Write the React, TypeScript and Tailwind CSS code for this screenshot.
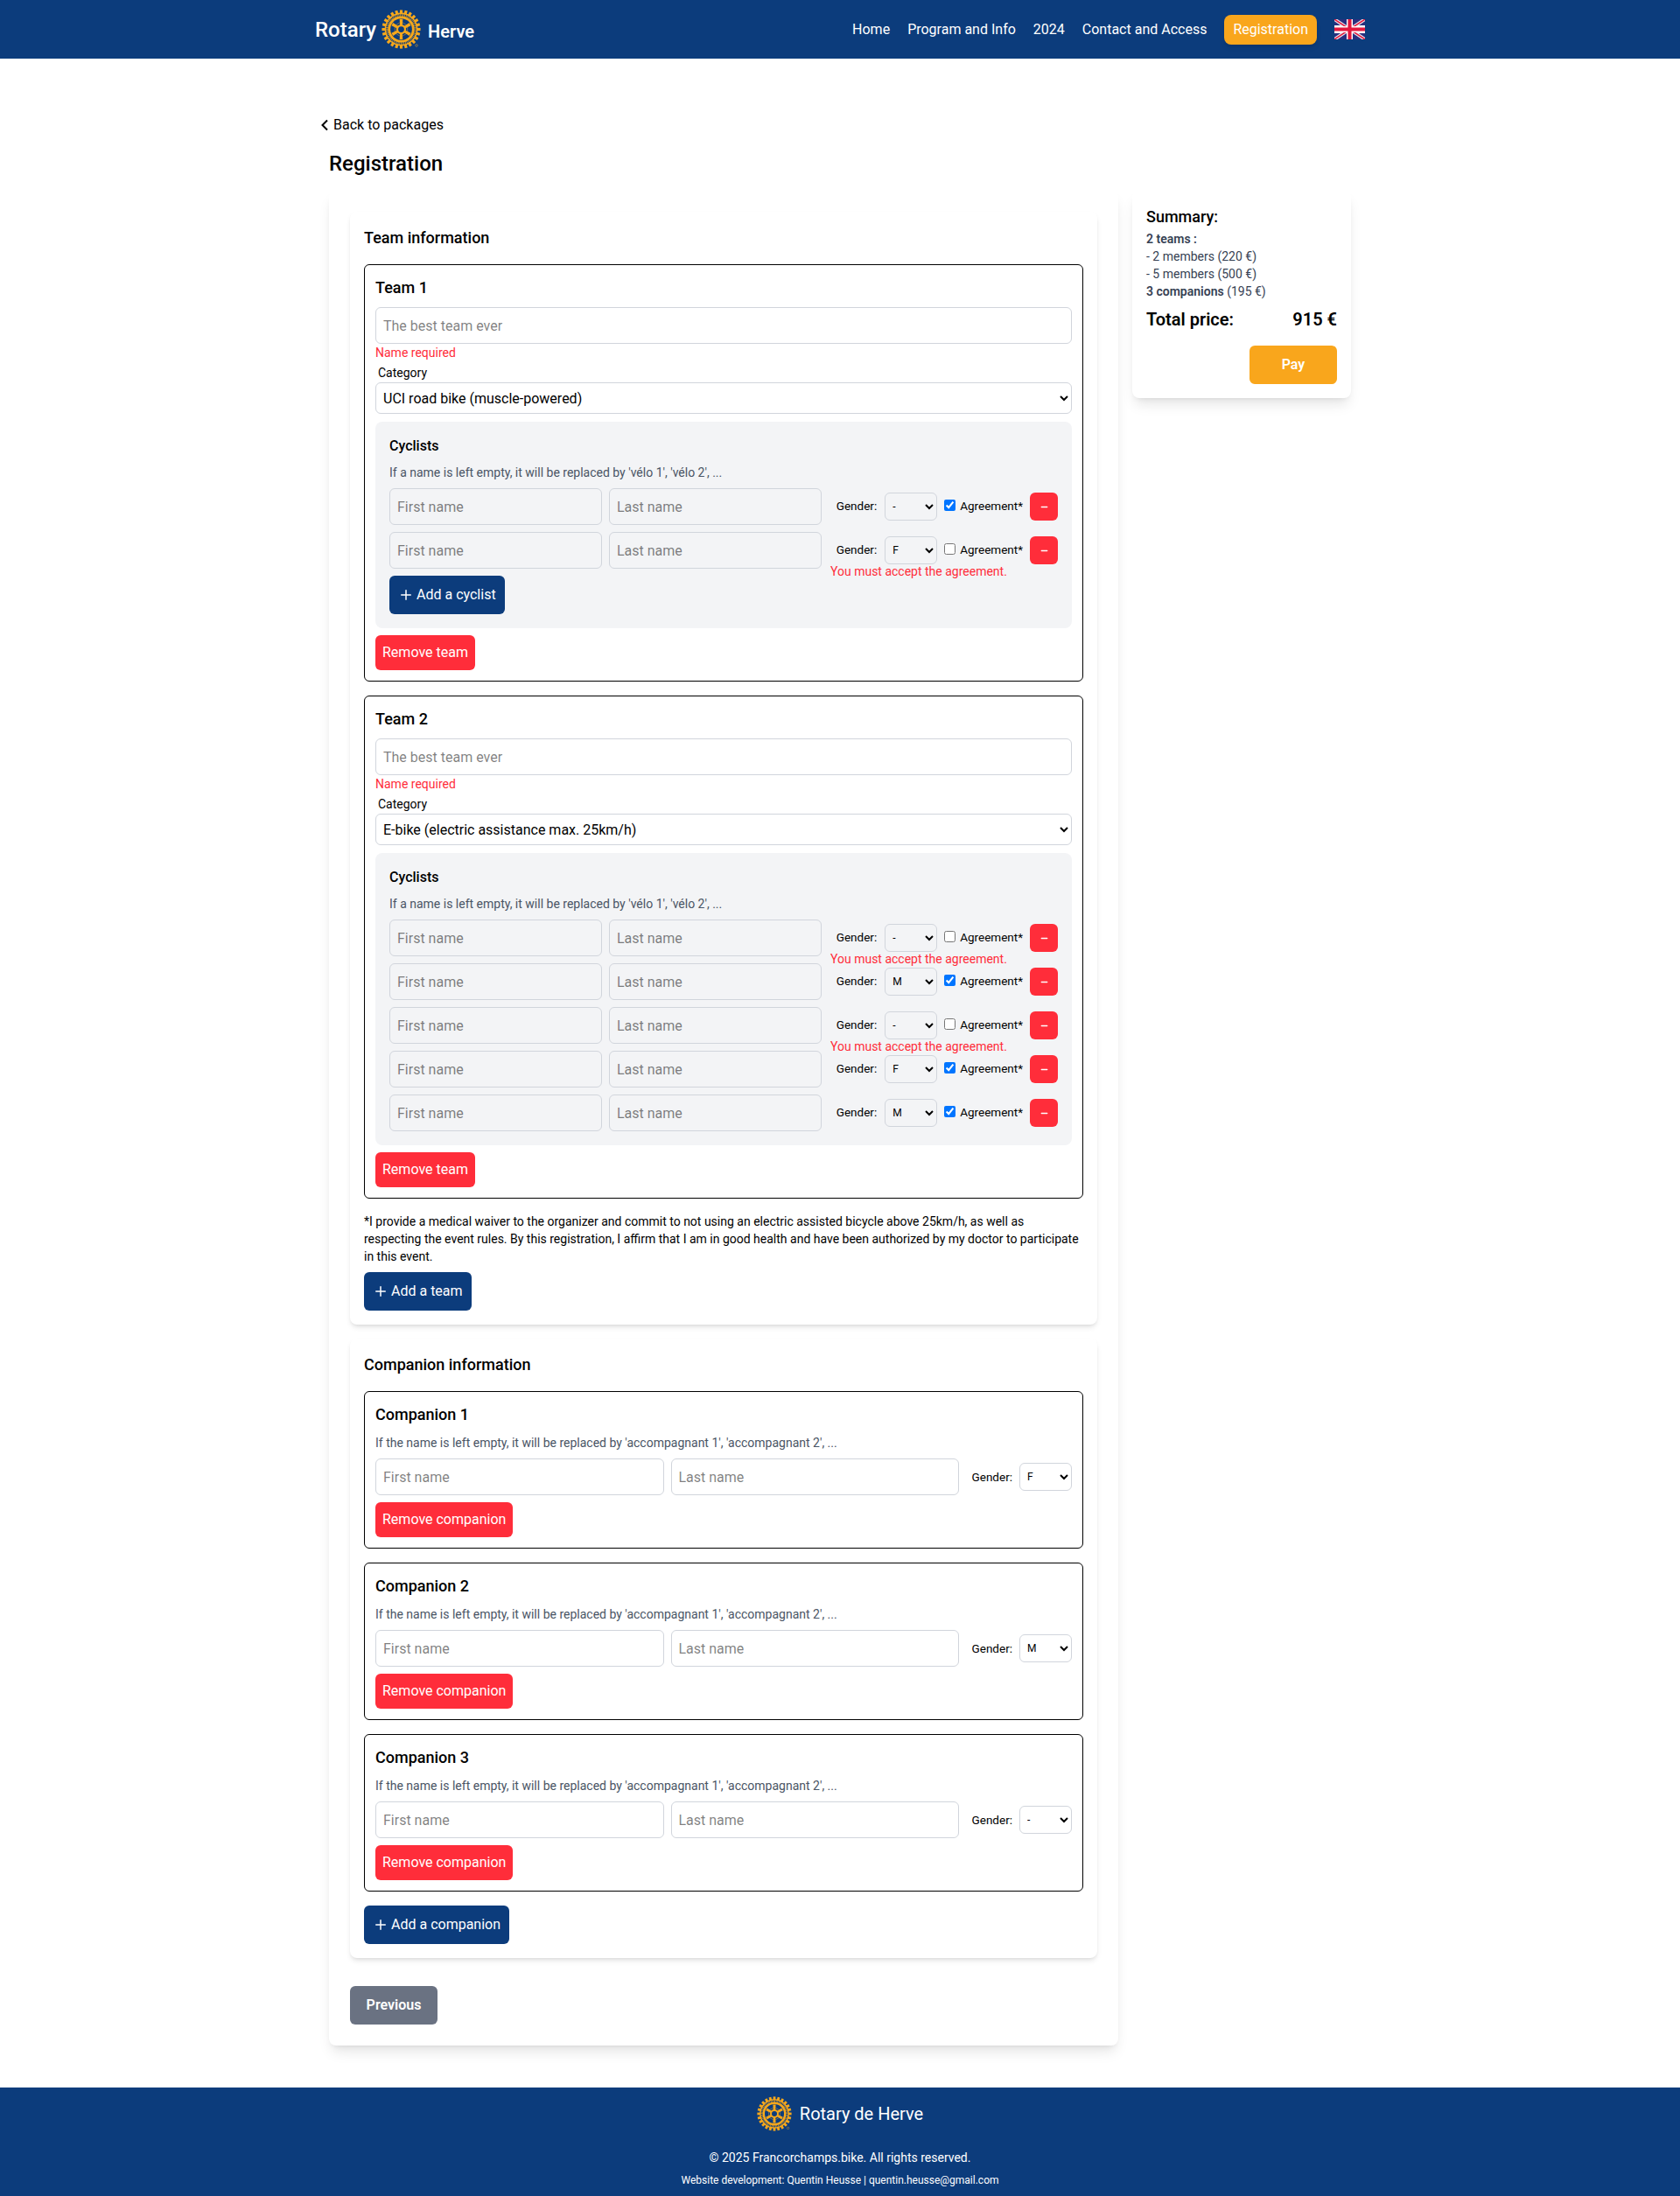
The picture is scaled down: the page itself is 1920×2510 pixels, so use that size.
import { Plus, Minus } from "lucide-react";

const NAVY = "#0c3c7c";

function Wheel({ className }: { className: string }) {
  const teeth = Array.from({ length: 24 }, (_, i) => i * 15);
  const spokes = [0, 60, 120, 180, 240, 300];
  return (
    <svg viewBox="0 0 100 100" className={className}>
      {teeth.map((a) => (
        <rect key={a} x="46.5" y="1" width="7" height="10" fill="#f7a81b" transform={`rotate(${a} 50 50)`} />
      ))}
      <circle cx="50" cy="50" r="42" fill="#f7a81b" />
      <circle cx="50" cy="50" r="36" fill="none" stroke={NAVY} strokeWidth="5" strokeDasharray="2.4 1.4" />
      <circle cx="50" cy="50" r="31" fill="#f7a81b" />
      <circle cx="50" cy="50" r="27.5" fill={NAVY} />
      {spokes.map((a) => (
        <path key={a} d="M47 40 L46 24 L54 24 L53 40 Z" fill="#f7a81b" transform={`rotate(${a} 50 50)`} />
      ))}
      <path d="M50 31 L66 40.5 L66 59.5 L50 69 L34 59.5 L34 40.5 Z" fill="none" stroke="#f7a81b" strokeWidth="2" opacity="0.55" />
      <circle cx="50" cy="50" r="12.5" fill="#f7a81b" />
      <circle cx="50" cy="50" r="7.5" fill={NAVY} />
      <circle cx="89" cy="91" r="3" fill="none" stroke="#f7a81b" strokeWidth="1" />
    </svg>
  );
}

function Flag() {
  return (
    <svg viewBox="0 0 60 40" className="h-[23px] w-[35px] shrink-0" preserveAspectRatio="none">
      <rect width="60" height="40" fill="#ffffff" />
      <path d="M0 0 L60 40 M60 0 L0 40" stroke="#e8e8ee" strokeWidth="8" />
      <path d="M0 0 L24 16 M36 24 L60 40 M60 0 L36 16 M24 24 L0 40" stroke="#e4173e" strokeWidth="2.6" />
      <path d="M6 0 L24 12 V0 Z M0 4 V12 H12 Z M54 0 L36 12 V0 Z M60 4 V12 H48 Z M6 40 L24 28 V40 Z M0 36 V28 H12 Z M54 40 L36 28 V40 Z M60 36 V28 H48 Z" fill="#2a2f7f" />
      <rect x="24" width="12" height="40" fill="#ffffff" />
      <rect y="14" width="60" height="12" fill="#ffffff" />
      <rect x="26.5" width="7" height="40" fill="#e4173e" />
      <rect y="16.5" width="60" height="7" fill="#e4173e" />
    </svg>
  );
}

const inputCls =
  "h-[42px] min-w-0 flex-1 rounded-md border border-gray-300 bg-transparent px-2 text-base text-black outline-none";

function Gender({ value }: { value: string }) {
  return (
    <select
      defaultValue={value}
      className="h-8 w-[60px] shrink-0 rounded-md border border-gray-300 bg-transparent pl-1 text-xs text-black"
    >
      <option value="-">-</option>
      <option value="M">M</option>
      <option value="F">F</option>
    </select>
  );
}

function Cyclist({ gender, agreed }: { gender: string; agreed: boolean }) {
  return (
    <div className="flex gap-2">
      <input placeholder="First name" className={inputCls} />
      <input placeholder="Last name" className={inputCls} />
      <div className="relative flex w-[262px] shrink-0 items-center justify-end gap-2 text-sm">
        <span className="mr-px text-[13.5px]">Gender:</span>
        <Gender value={gender} />
        <label className="flex items-center gap-[5px]">
          <input type="checkbox" defaultChecked={agreed} className="m-0 mb-1 size-[13px]" />
          <span className="text-[13.5px]">Agreement*</span>
        </label>
        <button className="flex size-8 shrink-0 items-center justify-center rounded-md bg-[#ff2d3a] text-white">
          <Minus size={11} strokeWidth={3} />
        </button>
        {!agreed && (
          <div className="absolute left-0.5 top-[35px] text-sm leading-5 text-[#ff2d3a]">
            You must accept the agreement.
          </div>
        )}
      </div>
    </div>
  );
}

function AddButton({ label }: { label: string }) {
  return (
    <button className="flex h-11 items-center rounded-md px-2.5 text-base text-white" style={{ background: NAVY }}>
      <Plus size={18} className="mr-[3px]" />
      {label}
    </button>
  );
}

function RedButton({ label }: { label: string }) {
  return <button className="mt-2 block h-10 rounded-md bg-[#ff2d3a] px-2 text-base text-white">{label}</button>;
}

function Team({ n, category, rows }: { n: number; category: string; rows: { g: string; a: boolean }[]; }) {
  return (
    <div className="rounded-md border border-black p-3">
      <h3 className="mb-2 text-lg font-medium leading-7">Team {n}</h3>
      <input placeholder="The best team ever" className="block h-[42px] w-full rounded-md border border-gray-300 px-2 text-base outline-none" />
      <div className="h-5 text-sm leading-5 text-[#ff2d3a]">Name required</div>
      <label className="mb-px ml-[3px] mt-[3px] block text-sm leading-5">Category</label>
      <select defaultValue={category} className="block h-9 w-full rounded-md border border-gray-300 bg-white pl-1 text-base text-black">
        <option>{category}</option>
      </select>
      <div className="mt-[9px] rounded-lg bg-gray-100 p-4">
        <h4 className="mb-2 text-base font-medium leading-6">Cyclists</h4>
        <p className="mb-2 text-sm leading-5 text-gray-600">If a name is left empty, it will be replaced by 'vélo 1', 'vélo 2', ...</p>
        <div className="flex flex-col gap-2">
          {rows.map((r, i) => (
            <Cyclist key={i} gender={r.g} agreed={r.a} />
          ))}
        </div>
        {rows.length < 5 && (
          <div className="mt-2 flex">
            <AddButton label="Add a cyclist" />
          </div>
        )}
      </div>
      <RedButton label="Remove team" />
    </div>
  );
}

function Companion({ n, gender }: { n: number; gender: string }) {
  return (
    <div className="rounded-md border border-black p-3">
      <h3 className="mb-2 text-lg font-medium leading-7">Companion {n}</h3>
      <p className="mb-2 text-sm leading-5 text-gray-600">If the name is left empty, it will be replaced by 'accompagnant 1', 'accompagnant 2', ...</p>
      <div className="flex gap-2">
        <input placeholder="First name" className={inputCls} />
        <input placeholder="Last name" className={inputCls} />
        <div className="flex w-[121px] shrink-0 items-center justify-end gap-2">
          <span className="text-[13.5px]">Gender:</span>
          <Gender value={gender} />
        </div>
      </div>
      <RedButton label="Remove companion" />
    </div>
  );
}

export default function App() {
  return (
    <div className="min-h-[2510px] bg-white font-['Roboto',sans-serif] text-black">
      <header className="h-[67px]" style={{ background: NAVY }}>
        <div className="mx-auto flex h-full w-[1200px] items-center justify-between text-white">
          <div className="flex items-center">
            <span className="text-2xl font-medium">Rotary</span>
            <Wheel className="ml-1.5 size-[45px]" />
            <span className="ml-2 mt-1 text-xl font-semibold">Herve</span>
          </div>
          <nav className="flex items-center gap-5 text-base">
            <span>Home</span>
            <span>Program and Info</span>
            <span>2024</span>
            <span>Contact and Access</span>
            <span className="flex h-[34px] items-center rounded-lg bg-[#f9a61c] px-2.5 shadow-md">Registration</span>
            <Flag />
          </nav>
        </div>
      </header>
      <main className="mx-auto w-[1168px] pt-16">
        <a className="-ml-2.5 flex items-center text-base leading-6">
          <svg viewBox="0 0 10 14" className="mr-[5px] h-3.5 w-2.5 pl-0">
            <path d="M8 1.5 L2.5 7 L8 12.5" fill="none" stroke="#000" strokeWidth="2" />
          </svg>
          Back to packages
        </a>
        <h1 className="mt-4 text-2xl font-medium leading-8">Registration</h1>
        <div className="mt-[15px] flex items-start gap-4">
          <div className="w-[902px] rounded-lg bg-white p-6 shadow-lg">
            <section className="rounded-lg bg-white p-4 shadow-md">
              <h2 className="mb-4 text-lg font-medium leading-7">Team information</h2>
              <div className="flex flex-col gap-4">
                <Team n={1} category="UCI road bike (muscle-powered)" rows={[{ g: "-", a: true }, { g: "F", a: false }]} />
                <Team
                  n={2}
                  category="E-bike (electric assistance max. 25km/h)"
                  rows={[{ g: "-", a: false }, { g: "M", a: true }, { g: "-", a: false }, { g: "F", a: true }, { g: "M", a: true }]}
                />
              </div>
              <p className="mt-4 text-sm leading-5">
                *I provide a medical waiver to the organizer and commit to not using an electric assisted bicycle above 25km/h, as well as respecting the event rules. By this registration, I affirm that I am in good health and have been authorized by my doctor to participate in this event.
              </p>
              <div className="mt-2 flex">
                <AddButton label="Add a team" />
              </div>
            </section>
            <section className="mt-4 rounded-lg bg-white p-4 shadow-md">
              <h2 className="mb-4 text-lg font-medium leading-7">Companion information</h2>
              <div className="flex flex-col gap-4">
                <Companion n={1} gender="F" />
                <Companion n={2} gender="M" />
                <Companion n={3} gender="-" />
              </div>
              <div className="mt-4 flex">
                <AddButton label="Add a companion" />
              </div>
            </section>
            <button className="mt-8 block h-11 w-[100px] rounded-md bg-gray-500 text-base font-semibold text-white">Previous</button>
          </div>
          <aside className="w-[250px] rounded-lg bg-white p-4 shadow-lg">
            <h2 className="text-lg font-medium leading-7">Summary:</h2>
            <div className="mt-px text-sm leading-5 text-gray-700">
              <div className="font-semibold">2 teams :</div>
              <div>- 2 members (220 €)</div>
              <div>- 5 members (500 €)</div>
              <div><span className="font-semibold">3 companions</span> (195 €)</div>
            </div>
            <div className="mt-2 flex justify-between text-xl font-semibold leading-7">
              <span>Total price:</span>
              <span>915 €</span>
            </div>
            <div className="mt-4 flex justify-end">
              <button className="h-11 w-[100px] rounded-md bg-[#f9a61c] text-base font-semibold text-white">Pay</button>
            </div>
          </aside>
        </div>
      </main>
      <footer className="mt-12 flex h-[124px] flex-col items-center pt-2.5 text-white" style={{ background: NAVY }}>
        <div className="flex items-center">
          <Wheel className="size-10" />
          <span className="ml-[9px] text-xl">Rotary de Herve</span>
        </div>
        <div className="mt-5 text-sm leading-5">© 2025 Francorchamps.bike. All rights reserved.</div>
        <div className="mt-2 text-xs leading-4">Website development: Quentin Heusse | quentin.heusse@gmail.com</div>
      </footer>
    </div>
  );
}
